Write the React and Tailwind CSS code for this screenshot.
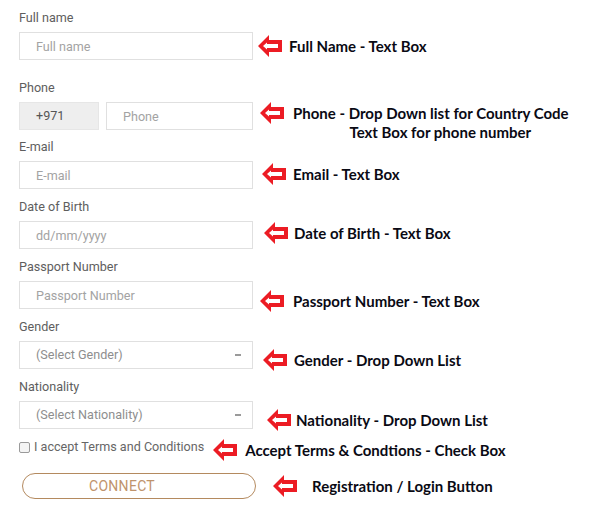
import React from 'react';

const Arrow = () => (
  <svg width="24" height="24" viewBox="0 0 24 24" className="shrink-0">
    <path d="M0 12 L11 1 L11 6 L24 6 L24 18 L11 18 L11 23 Z" fill="#ec1c24" />
    <path d="M5 12 L9 8.5 L9 10 L20 10 L20 14 L9 14 L9 15.5 Z" fill="#ffffff" />
  </svg>
);

function Note({className, gap, children}) {
  return (
    <div className={`flex items-center ${className}`}>
      <Arrow />
      <span className={`font-['Lato'] text-[15px] font-bold leading-[19px] whitespace-nowrap text-[#0a0a14] ${gap}`}>
        {children}
      </span>
    </div>
  );
}

function Label({children}) {
  return <div className="mb-[7px] text-[12.6px] leading-[14px] text-[#5e5e5e]">{children}</div>;
}

function TextBox({placeholder, className = 'w-[234px]'}) {
  return (
    <input
      readOnly
      placeholder={placeholder}
      className={`h-[28px] border border-[#e0e0e0] bg-white pl-[16px] text-[12.6px] outline-none placeholder:text-[#a3a3a3] ${className}`}
    />
  );
}

function SelectBox({placeholder}) {
  return (
    <div className="flex h-[28px] w-[234px] items-center justify-between border border-[#e0e0e0] bg-white pl-[16px] pr-[11px] text-[12.6px] text-[#8e8e8e]">
      <span>{placeholder}</span>
      <span className="h-[2px] w-[6px] bg-[#9a9a9a]" />
    </div>
  );
}

export default function App() {
  return (
    <div className="h-[512px] w-[606px] bg-white pl-[19px] pt-[11px] font-['Roboto',sans-serif]">
      <div className="flex h-[49px]">
        <div className="w-[234px] shrink-0">
          <Label>Full name</Label>
          <TextBox placeholder="Full name" />
        </div>
        <Note className="ml-[5px] mt-[23px] self-start" gap="ml-[7px]">Full Name - Text Box</Note>
      </div>

      <div className="mt-[21px] flex h-[49px]">
        <div className="w-[234px] shrink-0">
          <Label>Phone</Label>
          <div className="flex gap-[7px]">
            <div className="flex h-[28px] w-[80px] items-center border border-[#e6e6e6] bg-[#eeeeee] pl-[16px] text-[12.6px] text-[#555]">
              +971
            </div>
            <TextBox placeholder="Phone" className="w-[147px]" />
          </div>
        </div>
        <div className="ml-[7px] mt-[20px] flex items-start self-start">
          <Arrow />
          <div className="ml-[9px] mt-[3px] text-center font-['Lato'] text-[15px] font-bold leading-[19px] whitespace-nowrap text-[#0a0a14]">
            <div>Phone - Drop Down list for Country Code</div>
            <div className="pl-[19px]">Text Box for phone number</div>
          </div>
        </div>
      </div>

      <div className="mt-[10px] flex h-[49px]">
        <div className="w-[234px] shrink-0">
          <Label>E-mail</Label>
          <TextBox placeholder="E-mail" />
        </div>
        <Note className="ml-[9px] mt-[22px] self-start" gap="ml-[7px]">Email - Text Box</Note>
      </div>

      <div className="mt-[11px] flex h-[49px]">
        <div className="w-[234px] shrink-0">
          <Label>Date of Birth</Label>
          <TextBox placeholder="dd/mm/yyyy" />
        </div>
        <Note className="ml-[11px] mt-[21px] self-start" gap="ml-[6px]">Date of Birth - Text Box</Note>
      </div>

      <div className="mt-[11px] flex h-[49px]">
        <div className="w-[234px] shrink-0">
          <Label>Passport Number</Label>
          <TextBox placeholder="Passport Number" />
        </div>
        <Note className="ml-[7px] mt-[29px] self-start" gap="ml-[9px]">Passport Number - Text Box</Note>
      </div>

      <div className="mt-[11px] flex h-[49px]">
        <div className="w-[234px] shrink-0">
          <Label>Gender</Label>
          <SelectBox placeholder="(Select Gender)" />
        </div>
        <Note className="ml-[10px] mt-[28px] self-start" gap="ml-[7px]">Gender - Drop Down List</Note>
      </div>

      <div className="mt-[11px] flex h-[49px]">
        <div className="w-[234px] shrink-0">
          <Label>Nationality</Label>
          <SelectBox placeholder="(Select Nationality)" />
        </div>
        <Note className="ml-[14px] mt-[28px] self-start" gap="ml-[5px]">Nationality - Drop Down List</Note>
      </div>

      <div className="mt-[10px] flex h-[16px] items-center">
        <span className="h-[11px] w-[11px] shrink-0 rounded-[2px] border border-[#9a9a9a] bg-[#f4f4f4]" />
        <span className="ml-[4px] text-[12.6px] leading-[14px] text-[#666]">I accept Terms and Conditions</span>
        <Note className="ml-[9px] mt-[6px]" gap="ml-[8px]">Accept Terms &amp; Condtions - Check Box</Note>
      </div>

      <div className="mt-[18px] flex items-center">
        <button className="ml-[3px] h-[26px] w-[234px] rounded-full border border-[#b48a5f] pr-[34px] text-[14px] tracking-[0.3px] text-[#bf936c]">
          CONNECT
        </button>
        <Note className="ml-[17px]" gap="ml-[15px]">Registration / Login Button</Note>
      </div>
    </div>
  );
}
